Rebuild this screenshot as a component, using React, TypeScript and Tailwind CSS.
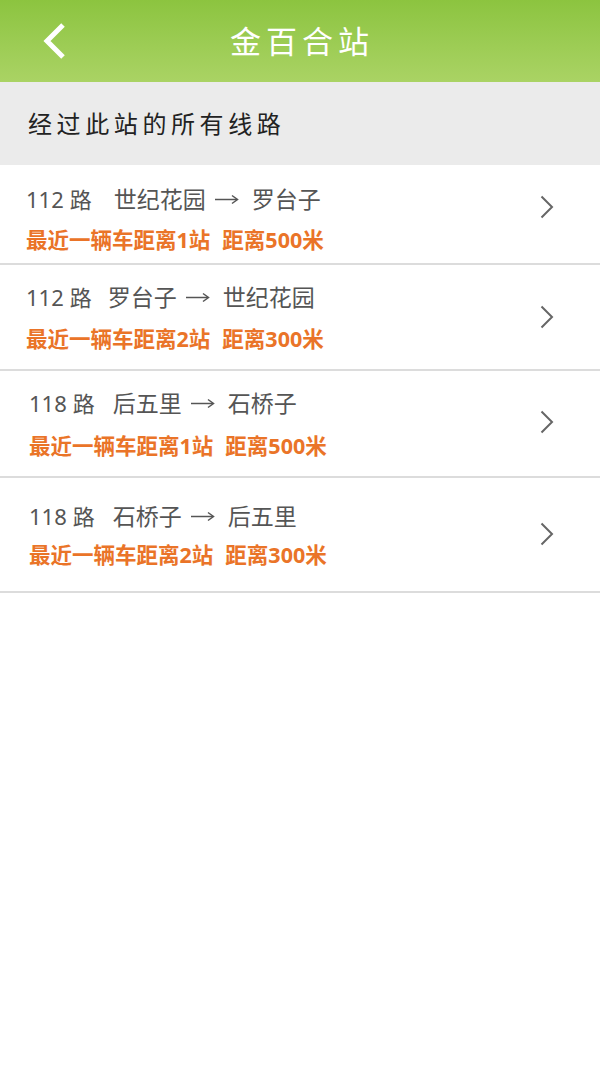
import React from 'react';

type Route = {
  line: string;
  from: string;
  to: string;
  stops: number;
  meters: number;
  pad: string;
  gap: string;
  arrowTop: string;
  textX: string;
  h: string;
  gapA: string;
};

const routes: Route[] = [
  { line: '112', from: '世纪花园', to: '罗台子', stops: 1, meters: 500, pad: 'pt-[19px]', gap: 'mt-[12px]', arrowTop: 'mt-[30px]', textX: 'pl-[26px]', h: 'h-[100px]', gapA: 'ml-[22px]' },
  { line: '112', from: '罗台子', to: '世纪花园', stops: 2, meters: 300, pad: 'pt-[17px]', gap: 'mt-[13px]', arrowTop: 'mt-[40px]', textX: 'pl-[26px]', h: 'h-[106px]', gapA: 'ml-[16px]' },
  { line: '118', from: '后五里', to: '石桥子', stops: 1, meters: 500, pad: 'pt-[17px]', gap: 'mt-[14px]', arrowTop: 'mt-[39px]', textX: 'pl-[29px]', h: 'h-[107px]', gapA: 'ml-[18px]' },
  { line: '118', from: '石桥子', to: '后五里', stops: 2, meters: 300, pad: 'pt-[23px]', gap: 'mt-[10px]', arrowTop: 'mt-[44px]', textX: 'pl-[29px]', h: 'h-[115px]', gapA: 'ml-[18px]' },
];

const font = { fontFamily: '"Noto Sans", "Noto Sans CJK SC", sans-serif' };

function Arrow() {
  return (
    <svg width="24" height="12" viewBox="0 0 24 12" fill="none" className="ml-[9px] mr-[13px]">
      <path d="M0 6.5 H22" stroke="#555" strokeWidth="1.5" />
      <path d="M17 2.5 L22.5 6.5 L17 10.5" stroke="#555" strokeWidth="1.5" />
    </svg>
  );
}

function RouteRow({ r }: { r: Route }) {
  return (
    <div className={`flex border-b-2 border-[#dcdcdc] ${r.h}`}>
      <div className={`flex-1 flex flex-col ${r.pad} ${r.textX}`}>
        <div className="flex items-center h-[30px] text-[22px] leading-[30px] text-[#555]">
          <span>{r.line}</span>
          <span className="ml-[6px]">路</span>
          <span className={`${r.gapA} text-[23px]`}>{r.from}</span>
          <Arrow />
          <span className="text-[23px]">{r.to}</span>
        </div>
        <div className={`h-[28px] text-[21.5px] leading-[28px] font-bold text-[#ea7428] ${r.gap}`}>
          最近一辆车距离{r.stops}站<span className="ml-[12px]">距离{r.meters}米</span>
        </div>
      </div>
      <div className={`w-[60px] ${r.arrowTop}`}>
        <svg width="14" height="24" viewBox="0 0 14 24" fill="none">
          <path d="M1.5 1.5 L12 12 L1.5 22.5" stroke="#666" strokeWidth="2" />
        </svg>
      </div>
    </div>
  );
}

export default function App() {
  return (
    <div className="w-[600px] min-h-[1065px] bg-white" style={font}>
      {/* Top bar */}
      <div className="h-[82px] bg-gradient-to-b from-[#8cc43f] to-[#aad364] flex items-center relative">
        <div className="pl-[42px] w-[100px]">
          <svg width="26" height="38" viewBox="0 0 26 38" fill="none">
            <path d="M21 3 L5 19 L21 35" stroke="#fff" strokeWidth="5" strokeLinejoin="miter" />
          </svg>
        </div>
        <div className="flex-1 text-center text-[31px] tracking-[5px] text-white -ml-[100px] pl-[4px]">
          金百合站
        </div>
      </div>

      {/* Section header */}
      <div className="h-[83px] bg-[#ebebeb] flex items-center pl-[28px] pt-[1px]">
        <span className="text-[24px] tracking-[4.6px] text-[#222]">经过此站的所有线路</span>
      </div>

      {routes.map((r, i) => (
        <RouteRow key={i} r={r} />
      ))}
    </div>
  );
}
